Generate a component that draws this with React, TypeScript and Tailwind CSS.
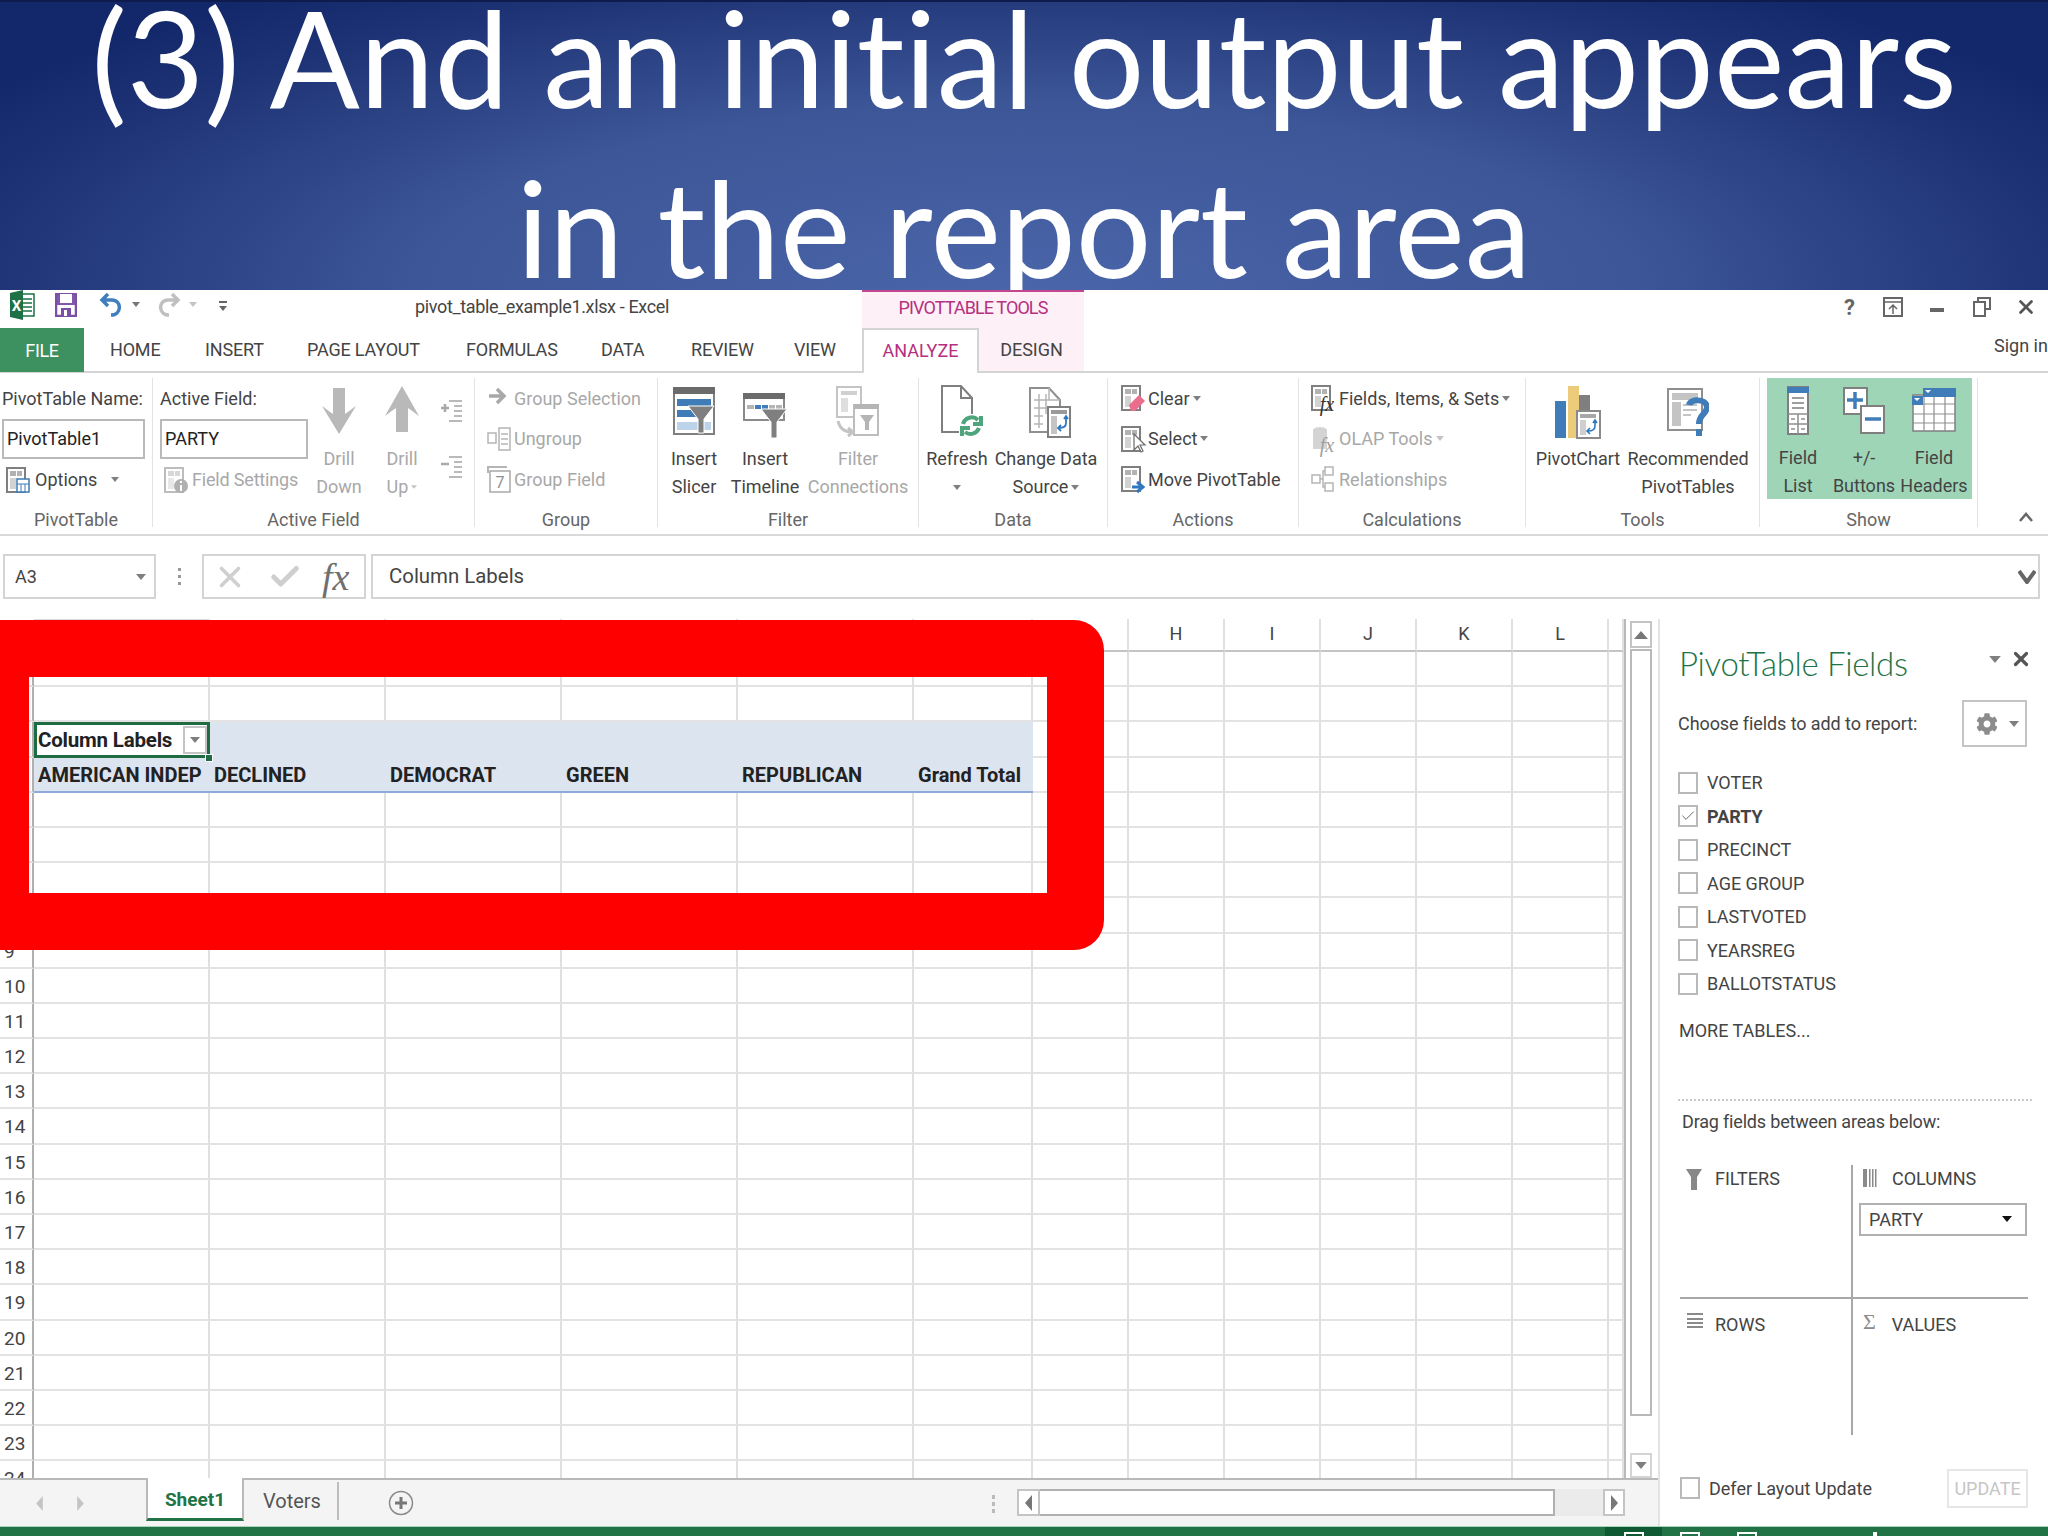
import React from "react";
import { Check, X } from "lucide-react";
import { FaCog } from "react-icons/fa";

const Caret = ({ c = "#7f7f7f", s = 5 }: { c?: string; s?: number }) => (
  <svg width={s * 2} height={s + 1} viewBox="0 0 10 6" className="shrink-0">
    <path d="M0 0H10L5 6Z" fill={c} />
  </svg>
);

// ribbon large icons: 66px tall box whose y=0 is the top of the ribbon content
const Big = ({ w, children, className }: { w: number; children: React.ReactNode; className?: string }) => (
  <svg width={w} height={66} viewBox={`0 0 ${w} 66`} className={className}>
    {children}
  </svg>
);

const SlicerIcon = () => (
  <Big w={42}>
    <rect x="1" y="10" width="40" height="46" fill="#fff" stroke="#7f7f7f" strokeWidth="2" />
    <rect x="0" y="9" width="42" height="7" fill="#6b6b6b" />
    <rect x="4" y="21" width="34" height="7" fill="#3f7cb8" />
    <rect x="4" y="32" width="20" height="7" fill="#3f7cb8" />
    <rect x="4" y="44" width="34" height="8" fill="#bcd3ea" />
    <path d="M15 28H41L31 41V55H25V41Z" fill="#7f7f7f" stroke="#fff" strokeWidth="1" />
  </Big>
);
const TimelineIcon = () => (
  <Big w={44}>
    <rect x="1" y="16" width="40" height="26" fill="#fff" stroke="#8a8a8a" strokeWidth="2" />
    <rect x="0" y="15" width="42" height="6" fill="#6b6b6b" />
    <rect x="4" y="27" width="7" height="4" fill="#b5b5b5" />
    <rect x="12" y="27" width="6" height="4" fill="#3f7cb8" />
    <rect x="19" y="27" width="6" height="4" fill="#3f7cb8" />
    <rect x="26" y="27" width="6" height="4" fill="#b5b5b5" />
    <rect x="33" y="27" width="6" height="4" fill="#b5b5b5" />
    <path d="M18 31H44L34 44V60H28V44Z" fill="#7f7f7f" stroke="#fff" strokeWidth="1" />
  </Big>
);
const FilterConnIcon = () => (
  <Big w={44}>
    <rect x="1" y="9" width="24" height="30" fill="#fff" stroke="#c4c4c4" strokeWidth="2" />
    <rect x="5" y="13" width="16" height="4" fill="#d0d0d0" />
    <rect x="5" y="20" width="7" height="14" fill="#dedede" />
    <rect x="18" y="27" width="24" height="30" fill="#fff" stroke="#bdbdbd" strokeWidth="2" />
    <rect x="18" y="26" width="25" height="5" fill="#b5b5b5" />
    <path d="M24 37H38L33 44V52H29V44Z" fill="#b5b5b5" />
    <path d="M2 43C4 52 10 54 16 54M12 50L17 54L12 58" fill="none" stroke="#c4c4c4" strokeWidth="3" />
  </Big>
);
const RefreshIcon = () => (
  <Big w={42} className="ml-[10px]">
    <path d="M1 8H20L31 20V54H1Z" fill="#fff" stroke="#7f7f7f" strokeWidth="2" />
    <path d="M20 8V20H31" fill="none" stroke="#7f7f7f" strokeWidth="2" />
    <rect x="18" y="36" width="24" height="24" fill="#fff" />
    <path d="M22 46A9 9 0 0 1 37 42M40 38V46H32" fill="none" stroke="#4fa57b" strokeWidth="4" />
    <path d="M38 50A9 9 0 0 1 24 54M21 58V50H29" fill="none" stroke="#4fa57b" strokeWidth="4" />
  </Big>
);
const ChangeSourceIcon = () => (
  <Big w={42} className="ml-[8px]">
    <path d="M1 10H20L31 22V54H1Z" fill="#fff" stroke="#8f8f8f" strokeWidth="2" />
    <path d="M20 10V22H31M5 22H20M5 30H24M5 38H14M5 46H14M10 16V50M17 16V36" fill="none" stroke="#b5b5b5" strokeWidth="1.5" />
    <rect x="19" y="29" width="22" height="30" fill="#fff" stroke="#7f7f7f" strokeWidth="2" />
    <rect x="22" y="32" width="16" height="4" fill="#9a9a9a" />
    <rect x="22" y="38" width="6" height="18" fill="#c4c4c4" />
    <path d="M37 39V45C37 49 33 50 30 50M35 41L37 38L39 41M32 47L29 50L32 53" fill="none" stroke="#2f78c0" strokeWidth="1.8" />
  </Big>
);
const PivotChartIcon = () => (
  <Big w={46}>
    <rect x="0" y="23" width="11" height="37" fill="#3f7cb8" />
    <rect x="13" y="8" width="11" height="52" fill="#eccb7b" />
    <rect x="24" y="17" width="11" height="30" fill="#7f7f7f" />
    <rect x="22" y="33" width="23" height="27" fill="#fff" stroke="#8a8a8a" strokeWidth="2" />
    <rect x="25" y="36" width="16" height="4" fill="#a8a8a8" />
    <rect x="25" y="42" width="6" height="15" fill="#cfcfcf" />
    <path d="M40 43V48C40 52 36 53 33 53M38 45L40 42L42 45M35 50L32 53L35 56" fill="none" stroke="#2f78c0" strokeWidth="1.6" />
  </Big>
);
const RecommendedIcon = () => (
  <Big w={42}>
    <rect x="1" y="11" width="34" height="41" fill="#fff" stroke="#8f8f8f" strokeWidth="2" />
    <rect x="5" y="15" width="26" height="7" fill="#c4c4c4" />
    <rect x="5" y="24" width="9" height="24" fill="#c4c4c4" />
    <path d="M16 27H30M16 32H30M16 37H24" stroke="#c4c4c4" strokeWidth="2" />
    <path d="M22 27C23 21 39 20 40 29C40 36 32 36 32 46" fill="none" stroke="#3f7cb8" strokeWidth="6" />
    <rect x="29" y="51" width="6" height="7" fill="#3f7cb8" />
  </Big>
);
const FieldListIcon = () => (
  <Big w={22}>
    <rect x="1" y="9" width="20" height="47" fill="#fff" stroke="#7f7f7f" strokeWidth="2" />
    <rect x="0" y="9" width="22" height="6" fill="#3f7cb8" />
    <path d="M5 20H17M5 25H17M5 30H17" stroke="#7f7f7f" strokeWidth="1.5" />
    <path d="M1 36H21M1 46H21M11 36V56" stroke="#8f8f8f" strokeWidth="1.5" />
    <path d="M4 41H8M14 41H18M4 51H8M14 51H18" stroke="#8f8f8f" strokeWidth="1.5" />
  </Big>
);
const PlusMinusIcon = () => (
  <Big w={42}>
    <rect x="1" y="10" width="23" height="26" fill="#fff" stroke="#7f7f7f" strokeWidth="2" />
    <path d="M4 22H20M12 14V31" stroke="#3f7cb8" strokeWidth="3.5" />
    <rect x="18" y="28" width="23" height="27" fill="#fff" stroke="#7f7f7f" strokeWidth="2" />
    <path d="M22 41H38" stroke="#3f7cb8" strokeWidth="3.5" />
  </Big>
);
const HeadersIcon = () => (
  <Big w={44}>
    <rect x="1" y="17" width="42" height="36" fill="#fff" stroke="#7f7f7f" strokeWidth="1.5" />
    <path d="M1 26H43M1 36H43M1 45H43M12 17V53M22 17V53M33 17V53" stroke="#8f8f8f" strokeWidth="1.2" />
    <rect x="11" y="10" width="33" height="9" fill="#3f7cb8" />
    <rect x="0" y="18" width="11" height="9" fill="#3f7cb8" />
    <path d="M13 12H19L16 15ZM2 20H8L5 23Z" fill="#fff" />
  </Big>
);
const DrillDownIcon = ({ up }: { up?: boolean }) => (
  <svg width={34} height={66} viewBox="0 0 34 66">
    <path
      d={up ? "M17 8L34 38C26 32 23 30 23 30V54H11V30C11 30 8 32 0 38Z" : "M11 10H23V36C23 36 26 34 34 28L17 56L0 28C8 34 11 36 11 36Z"}
      fill="#b9b9b9"
    />
  </svg>
);

// small 24x28 icons
const Sm = ({ children, w = 24 }: { children: React.ReactNode; w?: number }) => (
  <svg width={w} height={28} viewBox={`0 0 ${w} 28`} className="shrink-0 overflow-visible">
    {children}
  </svg>
);
const Sheet = ({ c = "#7f7f7f" }: { c?: string }) => (
  <>
    <rect x="1" y="2" width="18" height="24" fill="#fff" stroke={c} strokeWidth="2" />
    <rect x="4" y="5" width="6" height="5" fill={c} opacity="0.6" />
    <rect x="11" y="5" width="5" height="5" fill={c} opacity="0.6" />
    <rect x="4" y="12" width="6" height="11" fill={c} opacity="0.35" />
  </>
);
const OptionsIcon = () => (
  <Sm>
    <Sheet />
    <rect x="11" y="13" width="12" height="13" fill="#fff" stroke="#3f7cb8" strokeWidth="1.5" />
    <path d="M11 18H23M15 18V26M19 18V26" stroke="#3f7cb8" strokeWidth="1" />
  </Sm>
);
const FieldSettingsIcon = () => (
  <Sm>
    <Sheet c="#bdbdbd" />
    <circle cx="17" cy="20" r="7" fill="#b0b0b0" />
    <path d="M17 15V17M17 19V25" stroke="#fff" strokeWidth="2" />
  </Sm>
);
const Arrow = () => (
  <Sm>
    <path d="M2 12H16M10 5L17 12L10 19" fill="none" stroke="#a8a8a8" strokeWidth="3.5" />
  </Sm>
);
const UngroupIcon = () => (
  <Sm>
    <rect x="1" y="8" width="8" height="10" fill="none" stroke="#b5b5b5" strokeWidth="1.5" />
    <rect x="12" y="3" width="11" height="22" fill="none" stroke="#b5b5b5" strokeWidth="1.5" />
    <path d="M14 9H21M14 14H21M14 19H21" stroke="#b5b5b5" strokeWidth="1.5" />
  </Sm>
);
const GroupFieldIcon = () => (
  <Sm>
    <path d="M1 8V2H20" fill="none" stroke="#b5b5b5" strokeWidth="2" />
    <rect x="3" y="6" width="20" height="21" fill="#fff" stroke="#a8a8a8" strokeWidth="1.5" />
    <text x="13" y="23" textAnchor="middle" fontSize="16" fill="#8f8f8f" fontFamily="Roboto">7</text>
  </Sm>
);
const ClearIcon = () => (
  <Sm>
    <Sheet />
    <path d="M8 21L18 11L24 17L14 27H10Z" fill="#ea6f8f" />
  </Sm>
);
const SelectIcon = () => (
  <Sm>
    <Sheet />
    <path d="M13 9L13 25L17 21L20 27L22 26L19 20H24Z" fill="#fff" stroke="#6b6b6b" strokeWidth="1.2" />
  </Sm>
);
const MoveIcon = () => (
  <Sm>
    <Sheet />
    <path d="M11 22H19M16 17L22 22L16 27" fill="none" stroke="#2f78c0" strokeWidth="3" />
  </Sm>
);
const FieldsIcon = ({ gray }: { gray?: boolean }) => (
  <Sm>
    {gray ? <path d="M2 5A7 3 0 0 1 16 5V24H2Z" fill="#d4d4d4" /> : <Sheet />}
    <text x="16" y="27" textAnchor="middle" fontSize="20" fontStyle="italic" fill={gray ? "#a0a0a0" : "#333"} fontFamily="Liberation Serif">fx</text>
  </Sm>
);
const RelationsIcon = () => (
  <Sm>
    <rect x="1" y="10" width="8" height="8" fill="none" stroke="#b5b5b5" strokeWidth="1.5" />
    <rect x="14" y="2" width="8" height="8" fill="none" stroke="#b5b5b5" strokeWidth="1.5" />
    <rect x="14" y="18" width="8" height="8" fill="none" stroke="#b5b5b5" strokeWidth="1.5" />
    <path d="M9 14H12V6H14M12 14V22H14" fill="none" stroke="#b5b5b5" strokeWidth="1.5" />
  </Sm>
);
const IndentIcon = ({ plus }: { plus?: boolean }) => (
  <svg width={24} height={26} viewBox="0 0 24 26">
    <path d="M9 3H22M14 8H22M14 13H22M14 18H22M9 23H22" stroke="#b9b9b9" strokeWidth="2" />
    <path d={plus ? "M1 10H9M5 6V14" : "M1 10H9"} stroke="#a8a8a8" strokeWidth="2.5" />
  </svg>
);

const Group = ({ className, label, children }: { className: string; label: string; children: React.ReactNode }) => (
  <div className={`h-[149px] shrink-0 border-r border-[#e3e3e3] flex flex-col ${className}`}>
    <div className="h-[132px] flex">{children}</div>
    <div className="h-[17px] leading-[20px] text-center text-[#666]">{label}</div>
  </div>
);

const LargeBtn = ({
  className,
  icon,
  l1,
  l2,
  gray,
}: {
  className: string;
  icon: React.ReactNode;
  l1: React.ReactNode;
  l2: React.ReactNode;
  gray?: boolean;
}) => (
  <div className={`flex flex-col items-center shrink-0 whitespace-nowrap ${className} ${gray ? "text-[#a8a8a8]" : "text-[#444]"}`}>
    <div className="h-[67px] flex justify-center">{icon}</div>
    <div className="h-[28px] leading-[28px]">{l1}</div>
    <div className="h-[28px] leading-[28px] flex items-center gap-[3px]">{l2}</div>
  </div>
);

const SmallItem = ({
  icon,
  label,
  gray,
  caret,
  iconBox,
}: {
  icon: React.ReactNode;
  label: string;
  gray?: boolean;
  caret?: boolean;
  iconBox: string;
}) => (
  <div className={`h-[40.5px] flex items-center whitespace-nowrap ${gray ? "text-[#a8a8a8]" : "text-[#444]"}`}>
    <div className={`shrink-0 ${iconBox}`}>{icon}</div>
    <span>{label}</span>
    {caret && (
      <span className="ml-[3px]">
        <Caret c={gray ? "#c4c4c4" : "#7f7f7f"} s={4} />
      </span>
    )}
  </div>
);

const tabs = [
  { label: "HOME", w: "w-[95px]" },
  { label: "INSERT", w: "w-[102px]" },
  { label: "PAGE LAYOUT", w: "w-[159px]" },
  { label: "FORMULAS", w: "w-[135px]" },
  { label: "DATA", w: "w-[90px]" },
  { label: "REVIEW", w: "w-[103px]" },
  { label: "VIEW", w: "w-[68px]" },
];

const columns = [
  { l: "", w: "w-[176px]" },
  { l: "", w: "w-[176px]" },
  { l: "", w: "w-[176px]" },
  { l: "", w: "w-[176px]" },
  { l: "", w: "w-[176px]" },
  { l: "", w: "w-[119px]" },
  { l: "", w: "w-[96px]" },
  { l: "H", w: "w-[96px]" },
  { l: "I", w: "w-[96px]" },
  { l: "J", w: "w-[96px]" },
  { l: "K", w: "w-[96px]" },
  { l: "L", w: "w-[96px]" },
  { l: "", w: "w-[15px]" },
];

const headerRow = ["AMERICAN INDEP", "DECLINED", "DEMOCRAT", "GREEN", "REPUBLICAN", "Grand Total"];
const rows = Array.from({ length: 24 }, (_, i) => i + 1);
const fields = ["VOTER", "PARTY", "PRECINCT", "AGE GROUP", "LASTVOTED", "YEARSREG", "BALLOTSTATUS"];

const Box = ({ checked }: { checked?: boolean }) => (
  <div className="w-[20px] h-[22px] border-2 border-[#b9b9b9] bg-white shrink-0 flex items-center justify-center">
    {checked && <Check size={16} strokeWidth={1.5} className="text-[#6b6b6b]" />}
  </div>
);

const SheetRow = ({ n }: { n: number }) => {
  const band = n === 3 || n === 4;
  return (
    <div className="flex h-[35.2px] shrink-0">
      <div className="w-[34px] shrink-0 border-r-2 border-b-2 border-r-[#b0b0b0] border-b-[#e3e3e3] pl-[4px] leading-[35px] text-[#444] text-[19px]">{n}</div>
      {columns.map((c, i) => {
        if (n === 3 && i === 0)
          return (
            <div key={i} className={`${c.w} shrink-0 relative bg-white border-[3px] border-[#1f6b42] flex items-center pl-[1px] font-bold text-[#222] text-[20.5px] tracking-[-0.01em]`}>
              Column Labels
              <div className="absolute right-0 top-[1px] w-[24px] h-[28px] bg-white border-2 border-[#c4c4c4] flex items-center justify-center">
                <Caret s={5} />
              </div>
              <div className="absolute right-[-6px] bottom-[-7px] w-[8px] h-[8px] bg-[#1f6b42] border border-white" />
            </div>
          );
        if (band && i < 6)
          return (
            <div key={i} className={`${c.w} shrink-0 bg-[#dce4f0] flex items-center pl-[4px] font-bold text-[#222] text-[20px] whitespace-nowrap ${n === 4 ? "border-b-2 border-[#8ea9db] pt-[2px]" : ""}`}>
              {n === 4 ? headerRow[i] : ""}
            </div>
          );
        return <div key={i} className={`${c.w} shrink-0 border-r-2 border-b-2 border-r-[#e0e0e0] border-b-[#e3e3e3]`} />;
      })}
    </div>
  );
};

export default function App() {
  return (
    <div className="relative w-[2048px] h-[1536px] overflow-hidden bg-white flex flex-col font-['Roboto',sans-serif] text-[18px] text-[#444]">
      {/* slide title */}
      <div className="h-[290px] shrink-0 overflow-hidden text-center text-white font-['Lato',sans-serif] text-[133.5px] [font-variant-ligatures:none] bg-[radial-gradient(ellipse_60%_130%_at_50%_100%,#4a65a9_0%,#3c5697_50%,#1e3375_85%,#12286a_100%)] border-t-2 border-[#0e1c4d] whitespace-nowrap">
        <div className="leading-[108px]">(3) And an initial output appears</div>
        <div className="mt-[56px] leading-[120px]">in the report area</div>
      </div>

      {/* title row */}
      <div className="h-[38px] shrink-0 flex">
        <div className="w-[862px] shrink-0 flex items-start relative">
          <svg width="26" height="30" viewBox="0 0 26 30" className="ml-[9px]">
            <rect x="10" y="4" width="15" height="22" fill="#fff" stroke="#1e7145" strokeWidth="1.5" />
            <path d="M14 9H23M14 13H23M14 17H23M14 21H23" stroke="#1e7145" strokeWidth="1.5" />
            <path d="M1 3L14 0V30L1 27Z" fill="#1e7145" />
            <text x="7.5" y="21" textAnchor="middle" fontSize="15" fontWeight="700" fill="#fff" fontFamily="Roboto">X</text>
          </svg>
          <svg width="22" height="24" viewBox="0 0 22 24" className="ml-[20px] mt-[3px]">
            <path d="M1 1H21V23H1Z" fill="#fff" stroke="#7b4fa6" strokeWidth="2.5" />
            <rect x="1" y="1" width="20" height="11" fill="#7b4fa6" opacity="0.95" />
            <rect x="5" y="1" width="12" height="9" fill="#fff" />
            <rect x="6" y="15" width="10" height="8" fill="#7b4fa6" />
            <rect x="9" y="17" width="3" height="6" fill="#fff" />
          </svg>
          <svg width="24" height="24" viewBox="0 0 24 24" className="ml-[22px] mt-[3px]">
            <path d="M9 1L3 7L9 13M3 7H13C23 7 23 22 12 22" fill="none" stroke="#3f7fbf" strokeWidth="3.5" />
          </svg>
          <span className="ml-[9px] mt-[12px]"><Caret s={4} c="#777" /></span>
          <svg width="24" height="24" viewBox="0 0 24 24" className="ml-[17px] mt-[3px]">
            <path d="M15 1L21 7L15 13M21 7H11C1 7 1 22 12 22" fill="none" stroke="#c0c0c0" strokeWidth="3.5" />
          </svg>
          <span className="ml-[8px] mt-[12px]"><Caret s={4} c="#c4c4c4" /></span>
          <span className="ml-[22px] mt-[11px] flex flex-col items-center gap-[3px]">
            <span className="block w-[8px] h-[2px] bg-[#666]" />
            <Caret s={4} c="#666" />
          </span>
          <span className="ml-[188px] leading-[34px] text-[#444] whitespace-nowrap tracking-[-0.02em]">pivot_table_example1.xlsx - Excel</span>
        </div>
        <div className="w-[222px] shrink-0 bg-[#fdf0f7] border-t-2 border-[#c4468f] text-center text-[#b5307f] leading-[32px] tracking-[-0.05em]">PIVOTTABLE TOOLS</div>
        <div className="flex-1 flex items-center justify-end pr-[11px] pb-[4px] text-[#666]">
          <span className="font-bold text-[22px] mr-[28px]">?</span>
          <svg width="20" height="20" viewBox="0 0 20 20" className="mr-[27px]">
            <rect x="1" y="1" width="18" height="18" fill="none" stroke="#666" strokeWidth="2" />
            <path d="M1 5H19M10 17V8M6 12L10 8L14 12" fill="none" stroke="#666" strokeWidth="1.5" />
          </svg>
          <span className="block w-[14px] h-[4px] bg-[#666] mr-[29px] mt-[6px]" />
          <svg width="18" height="20" viewBox="0 0 18 20" className="mr-[24px]">
            <rect x="5" y="1" width="12" height="11" fill="none" stroke="#666" strokeWidth="2" />
            <rect x="1" y="5" width="11" height="14" fill="#fff" stroke="#666" strokeWidth="2" />
          </svg>
          <X size={22} strokeWidth={3} className="text-[#555]" />
        </div>
      </div>

      {/* ribbon tabs */}
      <div className="h-[45px] shrink-0 flex border-b-2 border-[#d4d4d4] relative">
        <div className="w-[84px] h-[44px] bg-[#3d9160] text-white flex items-center justify-center tracking-[-0.02em]">FILE</div>
        <div className="ml-[26px] flex">
          {tabs.map((t) => (
            <div key={t.label} className={`${t.w} shrink-0 leading-[44px] text-[#444] whitespace-nowrap tracking-[-0.01em]`}>{t.label}</div>
          ))}
        </div>
        <div className="w-[117px] h-[45px] bg-white border-2 border-b-0 border-[#d4d4d4] text-center leading-[42px] text-[#b5307f]">ANALYZE</div>
        <div className="w-[105px] h-[43px] bg-[#fdf0f7] text-center leading-[44px] text-[#444]">DESIGN</div>
        <div className="ml-auto w-[54px] overflow-hidden whitespace-nowrap leading-[36px]">Sign in</div>
      </div>

      {/* ribbon */}
      <div className="h-[163px] shrink-0 border-b-2 border-[#d9d9d9] flex pt-[5px]">
        <Group className="w-[153px]" label="PivotTable">
          <div className="pl-[2px] flex flex-col">
            <div className="h-[40.5px] flex items-center whitespace-nowrap">PivotTable Name:</div>
            <div className="h-[40.5px]"><div className="w-[143px] h-[40px] border-2 border-[#b9b9b9] pl-[3px] leading-[36px] text-[#222]">PivotTable1</div></div>
            <div className="h-[41px] flex items-center pl-[4px]">
              <OptionsIcon />
              <span className="ml-[5px]">Options</span>
              <span className="ml-[14px]"><Caret s={4} /></span>
            </div>
          </div>
        </Group>
        <Group className="w-[322px]" label="Active Field">
          <div className="pl-[7px] w-[161px] shrink-0 flex flex-col">
            <div className="h-[40.5px] flex items-center">Active Field:</div>
            <div className="h-[40.5px]"><div className="w-[148px] h-[40px] border-2 border-[#b9b9b9] pl-[3px] leading-[36px] text-[#222]">PARTY</div></div>
            <div className="h-[41px] flex items-center pl-[4px] text-[#a8a8a8] whitespace-nowrap">
              <FieldSettingsIcon />
              <span className="ml-[4px] tracking-[-0.01em]">Field Settings</span>
            </div>
          </div>
          <LargeBtn className="w-[50px]" gray icon={<DrillDownIcon />} l1="Drill" l2="Down" />
          <LargeBtn className="w-[50px] ml-[13px]" gray icon={<DrillDownIcon up />} l1="Drill" l2={<>Up<Caret s={3} c="#c4c4c4" /></>} />
          <div className="ml-[13px] pt-[20px] flex flex-col gap-[30px]">
            <IndentIcon plus />
            <IndentIcon />
          </div>
        </Group>
        <Group className="w-[183px]" label="Group">
          <div className="pl-[12px]">
            <SmallItem gray iconBox="w-[27px]" icon={<Arrow />} label="Group Selection" />
            <SmallItem gray iconBox="w-[27px]" icon={<UngroupIcon />} label="Ungroup" />
            <SmallItem gray iconBox="w-[27px]" icon={<GroupFieldIcon />} label="Group Field" />
          </div>
        </Group>
        <Group className="w-[261px]" label="Filter">
          <LargeBtn className="w-[72px]" icon={<SlicerIcon />} l1="Insert" l2="Slicer" />
          <LargeBtn className="w-[70px]" icon={<TimelineIcon />} l1="Insert" l2="Timeline" />
          <LargeBtn className="w-[116px]" gray icon={<FilterConnIcon />} l1="Filter" l2="Connections" />
        </Group>
        <Group className="w-[189px]" label="Data">
          <LargeBtn className="w-[76px]" icon={<RefreshIcon />} l1="Refresh" l2={<Caret s={4} />} />
          <LargeBtn className="w-[102px]" icon={<ChangeSourceIcon />} l1="Change Data" l2={<>Source<Caret s={4} /></>} />
        </Group>
        <Group className="w-[191px]" label="Actions">
          <div className="pl-[13px]">
            <SmallItem caret iconBox="w-[27px]" icon={<ClearIcon />} label="Clear" />
            <SmallItem caret iconBox="w-[27px]" icon={<SelectIcon />} label="Select" />
            <SmallItem iconBox="w-[27px]" icon={<MoveIcon />} label="Move PivotTable" />
          </div>
        </Group>
        <Group className="w-[227px]" label="Calculations">
          <div className="pl-[12px]">
            <SmallItem caret iconBox="w-[28px]" icon={<FieldsIcon />} label="Fields, Items, & Sets" />
            <SmallItem caret gray iconBox="w-[28px]" icon={<FieldsIcon gray />} label="OLAP Tools" />
            <SmallItem gray iconBox="w-[28px]" icon={<RelationsIcon />} label="Relationships" />
          </div>
        </Group>
        <Group className="w-[234px]" label="Tools">
          <LargeBtn className="w-[104px]" icon={<PivotChartIcon />} l1="PivotChart" l2="" />
          <LargeBtn className="w-[116px]" icon={<RecommendedIcon />} l1="Recommended" l2="PivotTables" />
        </Group>
        <Group className="w-[218px]" label="Show">
          <div className="ml-[7px] w-[205px] h-[121px] bg-[#9fd5b7] flex">
            <LargeBtn className="w-[62px]" icon={<FieldListIcon />} l1="Field" l2="List" />
            <LargeBtn className="w-[70px]" icon={<PlusMinusIcon />} l1="+/-" l2="Buttons" />
            <LargeBtn className="w-[70px]" icon={<HeadersIcon />} l1="Field" l2="Headers" />
          </div>
        </Group>
        <div className="flex-1 flex justify-end items-end pr-[15px] pb-[12px]">
          <svg width="14" height="10" viewBox="0 0 14 10"><path d="M1 9L7 2L13 9" fill="none" stroke="#666" strokeWidth="2.5" /></svg>
        </div>
      </div>

      {/* formula bar */}
      <div className="h-[83px] shrink-0 pt-[18px] flex items-start">
        <div className="ml-[3px] w-[153px] h-[45px] border-2 border-[#d4d4d4] flex items-center justify-between pl-[10px] pr-[8px] text-[#444]">
          A3
          <Caret s={5} />
        </div>
        <div className="w-[46px] h-[45px] flex flex-col items-center justify-center gap-[4px]">
          <span className="w-[3px] h-[3px] bg-[#999]" />
          <span className="w-[3px] h-[3px] bg-[#999]" />
          <span className="w-[3px] h-[3px] bg-[#999]" />
        </div>
        <div className="w-[164px] h-[45px] border-2 border-[#d4d4d4] flex items-center pl-[9px]">
          <X size={34} strokeWidth={2.5} className="text-[#cfcfcf]" />
          <Check size={34} strokeWidth={3.5} className="text-[#cfcfcf] ml-[21px]" />
          <span className="ml-[20px] font-['Liberation_Serif',serif] italic text-[38px] text-[#6f6f6f] leading-none">fx</span>
        </div>
        <div className="ml-[5px] w-[1669px] h-[45px] border-2 border-[#d4d4d4] flex items-center justify-between pl-[16px] pr-[2px] text-[20.4px]">
          Column Labels
          <svg width="18" height="14" viewBox="0 0 18 14"><path d="M1 1L9 12L17 1" fill="none" stroke="#666" strokeWidth="4" /></svg>
        </div>
      </div>

      {/* sheet + field pane */}
      <div className="flex-1 flex min-h-0">
        <div className="w-[1658px] shrink-0 flex flex-col">
          <div className="h-[859px] shrink-0 flex">
            <div className="w-[1626px] shrink-0 flex flex-col overflow-hidden border-r-2 border-[#b9b9b9]">
              <div className="flex h-[33px] shrink-0">
                <div className="w-[34px] shrink-0 border-b-2 border-[#d4d4d4]" />
                {columns.map((c, i) => (
                  <div key={i} className={`${c.w} shrink-0 border-r-2 border-b-2 border-r-[#e0e0e0] border-b-[#c4c4c4] text-center leading-[30px] ${i === 0 ? "bg-[#d8d8d8]" : ""}`}>{c.l}</div>
                ))}
              </div>
              {rows.map((n) => <SheetRow key={n} n={n} />)}
            </div>
            <div className="flex-1 pl-[4px] pr-[6px] flex flex-col bg-white">
              <div className="h-[27px] shrink-0 mt-[2px] border-2 border-[#c4c4c4] flex items-center justify-center"><svg width="14" height="8" viewBox="0 0 14 8"><path d="M0 8L7 0L14 8Z" fill="#777" /></svg></div>
              <div className="flex-1 mt-[1px] border-2 border-[#b9b9b9] mb-[37px]" />
              <div className="h-[25px] shrink-0 border-2 border-[#d4d4d4] flex items-center justify-center"><Caret s={6} /></div>
            </div>
          </div>
          {/* sheet tabs */}
          <div className="flex-1 bg-[#f4f4f4] border-t-2 border-[#b9b9b9] flex items-start">
            <div className="w-[146px] shrink-0 h-[47px] flex items-center pl-[36px] gap-[34px]">
              <svg width="7" height="15" viewBox="0 0 8 18"><path d="M8 0V18L0 9Z" fill="#c4c4c4" /></svg>
              <svg width="7" height="15" viewBox="0 0 8 18"><path d="M0 0V18L8 9Z" fill="#c4c4c4" /></svg>
            </div>
            <div className="w-[98px] shrink-0 h-[43px] -mt-[2px] pt-[4px] bg-white border-x-2 border-b-[3px] border-x-[#b9b9b9] border-b-[#217346] flex items-center justify-center font-bold text-[#217346] text-[19px]">Sheet1</div>
            <div className="w-[95px] shrink-0 h-[38px] mt-[2px] border-r-2 border-[#bdbdbd] flex items-center pl-[19px] text-[#555] text-[20px]">Voters</div>
            <svg width="26" height="26" viewBox="0 0 26 26" className="ml-[49px] mt-[10px]">
              <circle cx="13" cy="13" r="11.5" fill="none" stroke="#8a8a8a" strokeWidth="1.5" />
              <path d="M7 13H19M13 7V19" stroke="#777" strokeWidth="3" />
            </svg>
            <div className="ml-[578px] h-[47px] flex flex-col justify-center gap-[3px]">
              <span className="w-[3px] h-[4px] bg-[#bbb]" />
              <span className="w-[3px] h-[4px] bg-[#bbb]" />
              <span className="w-[3px] h-[4px] bg-[#bbb]" />
            </div>
            {/* horizontal scrollbar */}
            <div className="ml-[22px] mt-[9px] w-[608px] h-[27px] flex bg-[#ebebeb]">
              <div className="w-[23px] shrink-0 bg-white border-2 border-[#c4c4c4] flex items-center justify-center">
                <svg width="7" height="16" viewBox="0 0 7 16"><path d="M7 0V16L0 8Z" fill="#777" /></svg>
              </div>
              <div className="w-[515px] shrink-0 bg-white border-2 border-l-0 border-[#b0b0b0]" />
              <div className="flex-1" />
              <div className="w-[22px] shrink-0 bg-white border-2 border-[#c4c4c4] flex items-center justify-center">
                <svg width="7" height="16" viewBox="0 0 7 16"><path d="M0 0V16L7 8Z" fill="#777" /></svg>
              </div>
            </div>
          </div>
        </div>

        {/* PivotTable Fields pane */}
        <div className="flex-1 border-l-2 border-[#e3e3e3] pl-[18px] flex flex-col min-w-0">
          <div className="mt-[25px] h-[40px] flex items-center">
            <span className="ml-[1px] font-['Lato',sans-serif] font-light text-[33px] text-[#217346] tracking-[-0.01em]">PivotTable Fields</span>
            <span className="ml-[81px] -mt-[10px]"><Caret s={6} /></span>
            <X size={22} strokeWidth={3.5} className="ml-[9px] -mt-[10px] text-[#555]" />
          </div>
          <div className="mt-[16px] h-[47px] flex items-center">
            <span className="w-[284px] whitespace-nowrap shrink-0 tracking-[-0.005em]">Choose fields to add to report:</span>
            <div className="w-[65px] h-[47px] border-2 border-[#c4c4c4] flex items-center pl-[12px] gap-[11px]">
              <FaCog size={22} className="text-[#8c8c8c]" />
              <Caret s={5} />
            </div>
          </div>
          <div className="mt-[19px] flex flex-col">
            {fields.map((f) => (
              <div key={f} className={`h-[33.5px] flex items-center gap-[9px] ${f === "PARTY" ? "font-bold" : ""}`}>
                <Box checked={f === "PARTY"} />
                {f}
              </div>
            ))}
          </div>
          <div className="mt-[15px] h-[30px] leading-[30px] ml-[1px]">MORE TABLES...</div>
          <div className="mt-[53px] w-[354px] border-t-2 border-dotted border-[#c9c9c9]" />
          <div className="mt-[9px] h-[24px] leading-[24px] ml-[4px] tracking-[-0.01em]">Drag fields between areas below:</div>
          <div className="mt-[31px] ml-[2px] w-[348px] grid grid-cols-[173px_175px] grid-rows-[134px_136px]">
            <div className="border-r-2 border-b-2 border-[#a8a8a8] flex items-start pl-[6px] gap-[13px]">
              <svg width="16" height="22" viewBox="0 0 16 22" className="mt-[4px]"><path d="M0 0H16L11 8V21H5V8Z" fill="#888" /></svg>
              FILTERS
            </div>
            <div className="border-b-2 border-[#a8a8a8] pl-[6px] flex flex-col">
              <div className="flex items-center gap-[13px] pl-[4px]">
                <svg width="15" height="18" viewBox="0 0 15 18"><path d="M0 0H4V18H0ZM6 0H7.5V18H6ZM9 0H10.5V18H9ZM12 0H13.5V18H12Z" fill="#8a8a8a" /></svg>
                <span className="ml-[1px]">COLUMNS</span>
              </div>
              <div className="mt-[11px] w-[168px] h-[33px] border-2 border-[#b0b0b0] flex items-center justify-between pl-[8px] pr-[13px]">
                PARTY
                <Caret c="#111" s={5} />
              </div>
            </div>
            <div className="border-r-2 border-[#a8a8a8] flex items-start pt-[12px] pl-[7px] gap-[12px]">
              <svg width="16" height="18" viewBox="0 0 16 18" className="mt-[2px]"><path d="M0 1H16M0 6H16M0 10H16M0 14H16" stroke="#8a8a8a" strokeWidth="2" /></svg>
              ROWS
            </div>
            <div className="pl-[10px] pt-[12px] flex items-start gap-[16px]">
              <span className="font-['Liberation_Serif',serif] text-[22px] leading-[22px] text-[#8a8a8a]">Σ</span>
              VALUES
            </div>
          </div>
          <div className="mt-[34px] ml-[2px] w-[348px] flex items-center">
            <Box />
            <span className="ml-[9px]">Defer Layout Update</span>
            <div className="ml-auto w-[81px] h-[39px] border-2 border-[#e6e6e6] flex items-center justify-center text-[#c6c6c6]">UPDATE</div>
          </div>
        </div>
      </div>

      {/* status bar */}
      <div className="h-[10px] shrink-0 bg-[#217346] border-t border-[#a9d3bb] flex overflow-hidden">
        <div className="ml-[1605px] w-[57px] h-[10px] bg-[#0f5a33] flex justify-center pt-[5px]">
          <span className="w-[20px] h-[12px] border-2 border-white" />
        </div>
        <span className="ml-[18px] mt-[5px] w-[20px] h-[12px] border-2 border-white" />
        <span className="ml-[37px] mt-[5px] w-[20px] h-[12px] border-2 border-white" />
        <span className="ml-[116px] mt-[5px] w-[4px] h-[8px] bg-white" />
      </div>

      {/* red highlight box drawn over the sheet */}
      <div className="absolute left-[-28px] top-[620px] w-[1132px] h-[330px] border-[57px] border-[#ff0000] rounded-[30px] pointer-events-none" />
    </div>
  );
}
